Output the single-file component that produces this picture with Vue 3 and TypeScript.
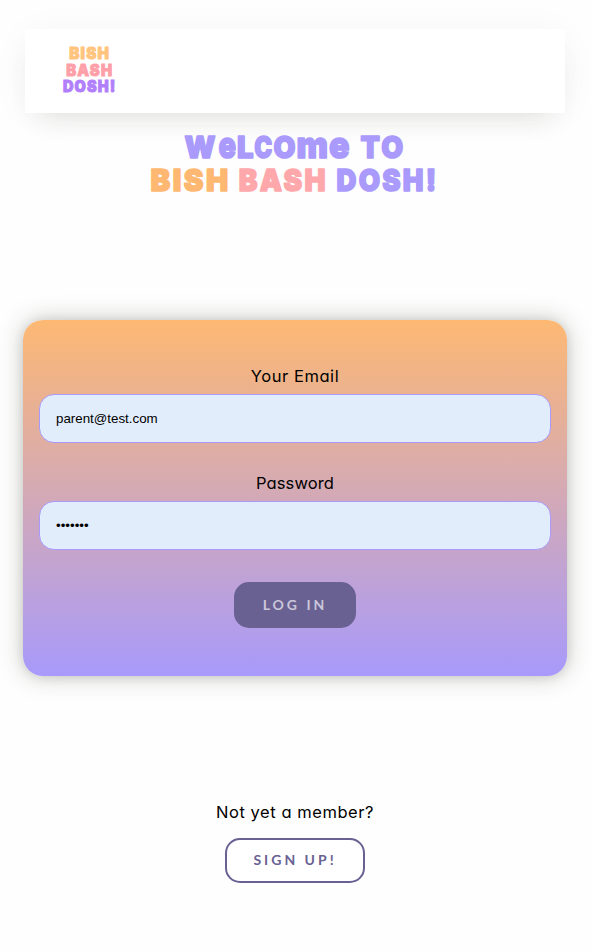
<script setup lang="ts">
import { ref } from 'vue'

const email = ref('parent@test.com')
const password = ref('dosh123')
</script>

<template>
  <div class="page">
    <header class="navbar">
      <svg class="logo" viewBox="0 0 56 56" role="img" aria-label="Bish Bash Dosh!">
        <text class="logo-word orange" x="7.2" y="16" textLength="41" lengthAdjust="spacingAndGlyphs">BISH</text>
        <text class="logo-word pink" x="4.2" y="32.7" textLength="47" lengthAdjust="spacingAndGlyphs">BASH</text>
        <text class="logo-word purple" x="1" y="49" textLength="53.5" lengthAdjust="spacingAndGlyphs">DOSH!</text>
      </svg>
    </header>

    <h1 class="title">
      <svg class="title-art" viewBox="0 0 296 66">
        <g class="lilac">
          <text x="37.5" y="25.5" textLength="31" lengthAdjust="spacingAndGlyphs">W</text>
          <text class="tall" x="71.5" y="25.5" textLength="17.5" lengthAdjust="spacingAndGlyphs">e</text>
          <text x="90" y="25.5" textLength="16.5" lengthAdjust="spacingAndGlyphs">L</text>
          <text x="107.3" y="25.5" textLength="18" lengthAdjust="spacingAndGlyphs">C</text>
          <text x="126.5" y="25.5" textLength="22" lengthAdjust="spacingAndGlyphs">O</text>
          <text class="tall" x="149.5" y="25.5" textLength="31.5" lengthAdjust="spacingAndGlyphs">m</text>
          <text class="tall" x="182" y="25.5" textLength="20.5" lengthAdjust="spacingAndGlyphs">e</text>
          <text class="word" x="213.5" y="25.5" textLength="45" lengthAdjust="spacingAndGlyphs">TO</text>
        </g>
        <text class="word apricot" x="3.5" y="59" textLength="80" lengthAdjust="spacingAndGlyphs">BISH</text>
        <text class="word rose" x="91.8" y="59" textLength="89" lengthAdjust="spacingAndGlyphs">BASH</text>
        <text class="word lilac" x="189.5" y="59" textLength="102" lengthAdjust="spacingAndGlyphs">DOSH!</text>
      </svg>
    </h1>

    <form class="card" @submit.prevent>
      <label class="label email-label" for="email">Your Email</label>
      <input id="email" v-model="email" class="field" type="email" />
      <label class="label password-label" for="password">Password</label>
      <input id="password" v-model="password" class="field" type="password" />
      <button class="button login" type="submit">LOG IN</button>
    </form>

    <section class="join">
      <p class="label question">Not yet a member?</p>
      <button class="button signup" type="button">SIGN UP!</button>
    </section>
  </div>
</template>

<style>
body {
  background: #fefefe;
}
</style>

<style scoped>
.page {
  box-sizing: border-box;
  height: 951px;
  padding: 29px 25px 0 23px;
  display: flex;
  flex-direction: column;
  color: #000;
  overflow: hidden;
}
.navbar {
  box-sizing: border-box;
  height: 84px;
  margin: 0 2px;
  padding: 14px 37px;
  background: #fff;
  box-shadow: 0 14px 28px -14px rgba(60, 60, 50, 0.15), 0 4px 40px -6px rgba(60, 60, 50, 0.07);
}
.logo {
  display: block;
  width: 56px;
  height: 56px;
  overflow: visible;
}
.logo-word {
  font: 900 15.5px/1 Inter, sans-serif;
  letter-spacing: 1.2px;
  stroke-width: 0.9;
}
.orange { fill: #ffc47d; stroke: #ffc47d; }
.pink { fill: #ff9fa8; stroke: #ff9fa8; }
.purple { fill: #b17efc; stroke: #b17efc; }
.title {
  height: 66px;
  margin: 19px 0 0;
  display: flex;
  justify-content: center;
}
.title-art {
  width: 296px;
  height: 66px;
  font: 900 30.5px/1 Inter, sans-serif;
  stroke-width: 1.5;
  stroke-linejoin: round;
  overflow: visible;
}
.word { letter-spacing: 2.5px; }
.tall { font-size: 37px; }
.lilac { fill: #a99afb; stroke: #a99afb; }
.apricot { fill: #ffb871; stroke: #ffb871; }
.rose { fill: #ffa8ab; stroke: #ffa8ab; }
.card {
  box-sizing: border-box;
  height: 356px;
  margin-top: 122px;
  padding: 46px 16px 48px;
  display: flex;
  flex-direction: column;
  align-items: center;
  border-radius: 20px;
  background: linear-gradient(#fdb873, #a89afb);
  box-shadow: 0 0 24px rgba(50, 50, 40, 0.27), 0 1px 10px rgba(50, 50, 40, 0.12);
}
.label {
  font: 400 16.5px/20px Inter, sans-serif;
  font-feature-settings: "cv11", "ss03";
}
.email-label { letter-spacing: 0.55px; }
.password-label {
  margin-top: 30px;
  letter-spacing: 0.1px;
}
.field {
  box-sizing: border-box;
  width: 100%;
  height: 49px;
  margin-top: 8px;
  padding: 0 16px;
  border: 1px solid #a899fa;
  border-radius: 15px;
  outline: none;
  background: #e2edfc;
  color: #000;
  font: 13.333px "Liberation Sans", Arial, sans-serif;
}
.button {
  box-sizing: border-box;
  border-radius: 15px;
  padding: 0 0 2px;
  font: 700 14px Lato, sans-serif;
  letter-spacing: 3px;
}
.login {
  width: 122px;
  height: 46px;
  margin-top: 32px;
  border: 0;
  background: #6a6193;
  color: #cbc6da;
}
.join {
  margin-top: 126px;
  display: flex;
  flex-direction: column;
  align-items: center;
}
.question {
  margin: 0;
  letter-spacing: 0.55px;
}
.signup {
  width: 140px;
  height: 45px;
  margin-top: 16px;
  border: 2px solid #6a6193;
  background: #fff;
  color: #6a6193;
}
</style>
